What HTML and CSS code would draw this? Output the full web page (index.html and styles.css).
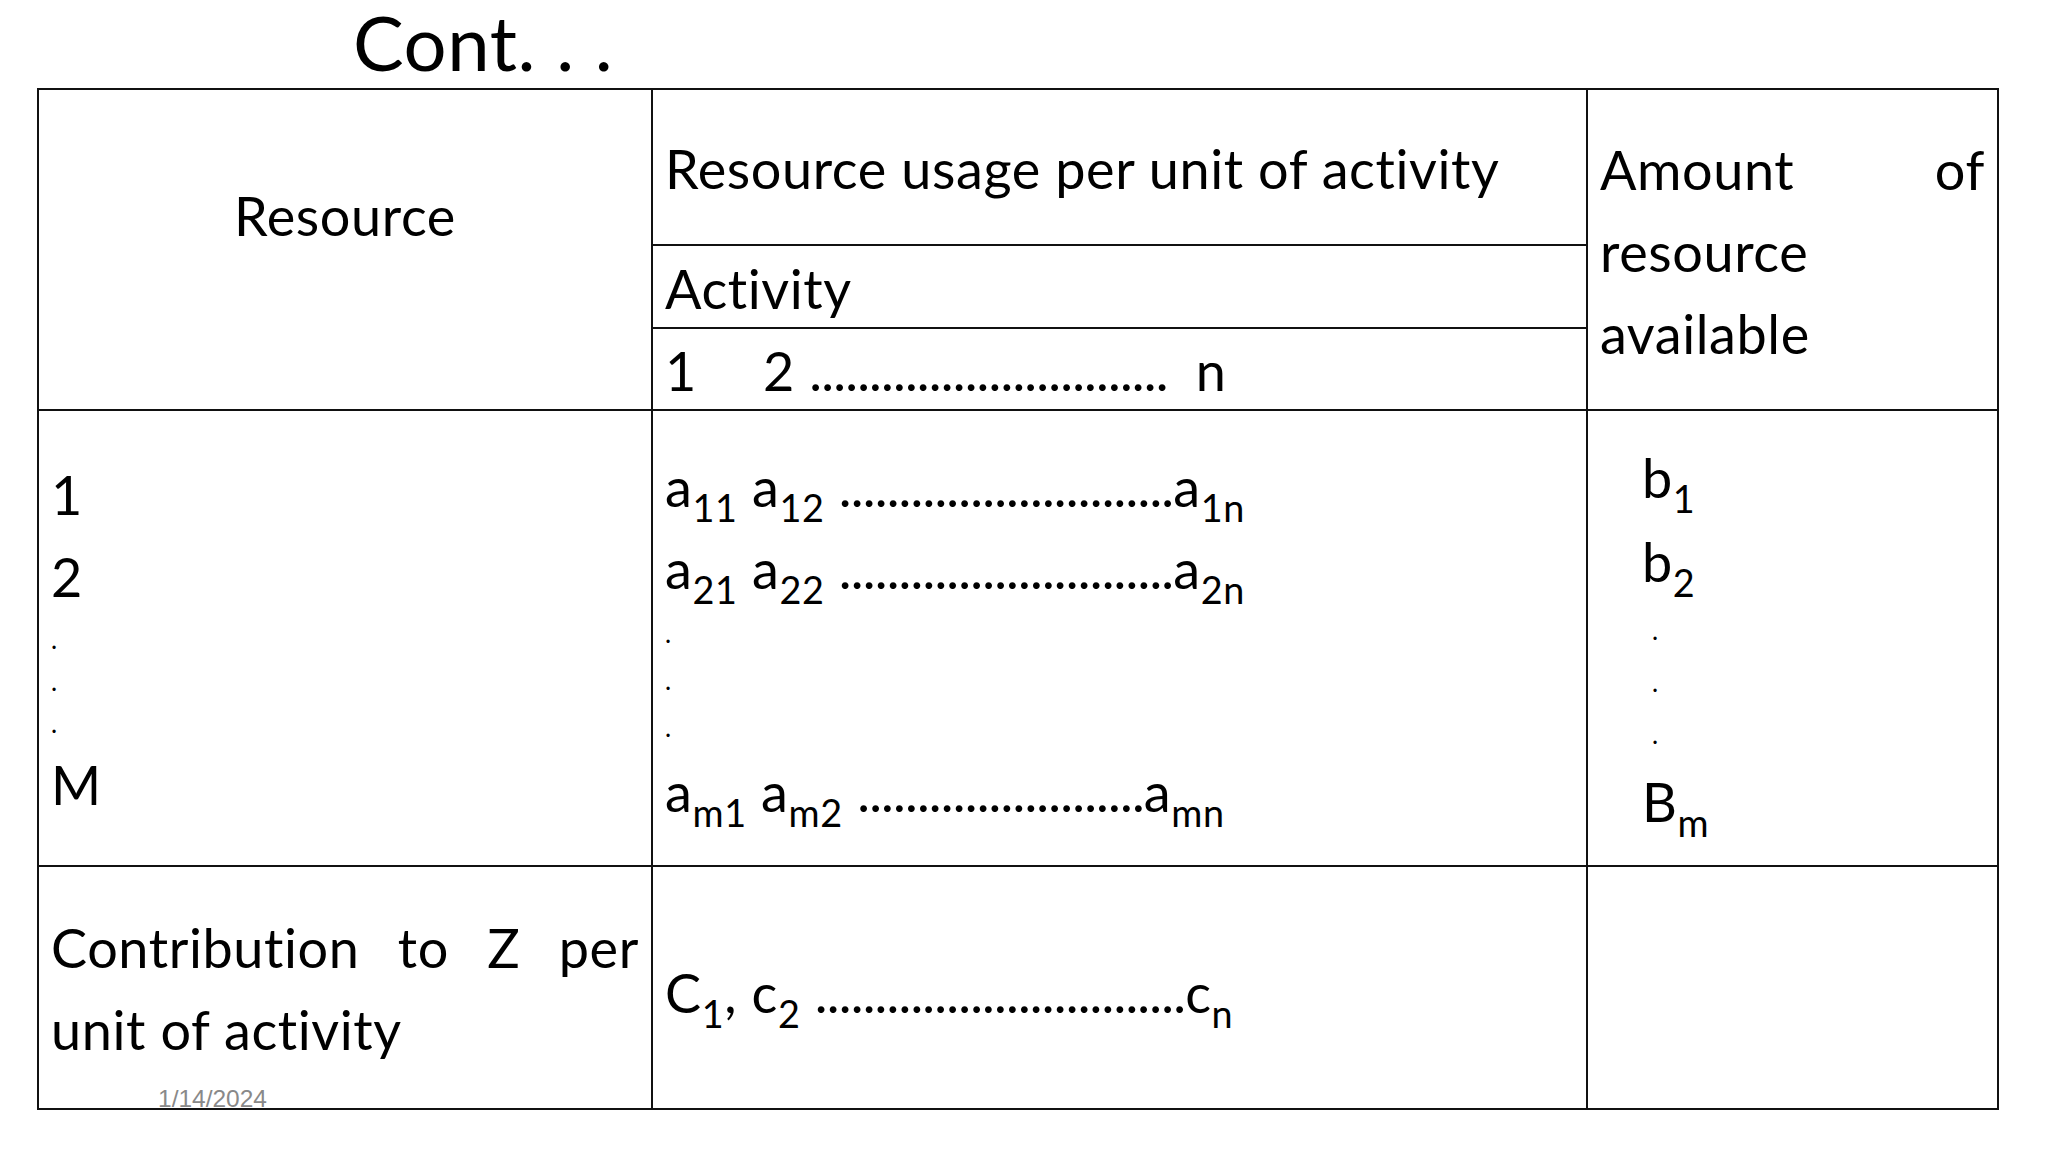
FILE: index.html
```html
<!DOCTYPE html>
<html lang="en">
<head>
<meta charset="utf-8">
<title>Cont. . .</title>
<link rel="stylesheet" href="styles.css">
</head>
<body>
<div class="slide">
  <h1 class="title">Cont. . .</h1>
  <table class="grid">
    <colgroup><col class="col-res"><col class="col-use"><col class="col-amt"></colgroup>
    <tbody>
      <tr class="row-h1">
        <td class="cell res-head" rowspan="3">Resource</td>
        <td class="cell usage">Resource usage per unit of activity</td>
        <td class="cell amount" rowspan="3"><span class="jline">Amount of</span><span class="line">resource</span><span class="line">available</span></td>
      </tr>
      <tr class="row-h2">
        <td class="cell act">Activity</td>
      </tr>
      <tr class="row-h3">
        <td class="cell nums"><span class="n1">1</span><span class="n2">2</span> <span class="dots">..............................</span><span class="nn">n</span></td>
      </tr>
      <tr class="row-body">
        <td class="cell body-res">
          <div class="line">1</div>
          <div class="line">2</div>
          <div class="dot">.</div>
          <div class="dot">.</div>
          <div class="dot">.</div>
          <div class="line">M</div>
        </td>
        <td class="cell body-use">
          <div class="line">a<sub>11</sub> a<sub>12</sub> <span class="dots">............................</span>a<sub>1n</sub></div>
          <div class="line">a<sub>21</sub> a<sub>22</sub> <span class="dots">............................</span>a<sub>2n</sub></div>
          <div class="dot">.</div>
          <div class="dot">.</div>
          <div class="dot">.</div>
          <div class="line">a<sub>m1</sub> a<sub>m2</sub> <span class="dots">........................</span>a<sub>mn</sub></div>
        </td>
        <td class="cell body-amt">
          <div class="line">b<sub>1</sub></div>
          <div class="line">b<sub>2</sub></div>
          <div class="dot">.</div>
          <div class="dot">.</div>
          <div class="dot">.</div>
          <div class="line">B<sub>m</sub></div>
        </td>
      </tr>
      <tr class="row-z">
        <td class="cell contrib"><span class="jline">Contribution to Z per</span><span class="line">unit of activity</span></td>
        <td class="cell cvals">C<sub>1</sub>, c<sub>2</sub> <span class="dots">...............................</span>c<sub>n</sub></td>
        <td class="cell empty"></td>
      </tr>
    </tbody>
  </table>
  <div class="date">1/14/2024</div>
</div>
</body>
</html>
```

FILE: styles.css
```css
* { box-sizing: border-box; }
html, body { margin: 0; padding: 0; background: #ffffff; }
body {
  width: 2048px;
  height: 1152px;
  overflow: hidden;
  font-family: "Lato", "Noto Sans", sans-serif;
  color: #000000;
}
.slide { position: relative; width: 2048px; height: 1152px; }

.title {
  margin: 0;
  height: 88px;
  padding-left: 353px;
  font-size: 76px;
  font-weight: 400;
  line-height: 84px;
  letter-spacing: 0.6px;
}

.grid {
  margin-left: 37px;
  width: 1961px;
  border-collapse: collapse;
  table-layout: fixed;
  font-size: 54px;
  line-height: 82px;
  letter-spacing: 0.6px;
}
.col-res { width: 614px; }
.col-use { width: 935px; }
.col-amt { width: 411px; }

.cell {
  border: 2px solid #111111;
  vertical-align: top;
  padding-left: 12px;
  padding-right: 12px;
}
.row-h1 { height: 156px; }
.row-h2 { height: 83px; }
.row-h3 { height: 82px; }
.row-body { height: 456px; }
.row-z { height: 243px; }

.line { display: block; }
.jline { display: block; text-align: justify; text-align-last: justify; }

.res-head { text-align: center; padding-top: 85px; }
.usage { padding-top: 38px; }
.amount { padding-top: 39px; }
.act { padding-top: 8px; line-height: 70px; }
.nums { padding-top: 7px; line-height: 70px; }
.n1 { display: inline-block; width: 98px; }
.nn { margin-left: 28px; }

.dots { letter-spacing: -0.8px; }

sub {
  font-size: 0.7em;
  line-height: 0;
  vertical-align: -15px;
}

.dot { font-size: 26px; line-height: 42px; }

.body-res { padding-top: 43px; }
.body-use { padding-top: 35px; }
.body-use .dot { line-height: 47px; }
.body-amt { padding-top: 25px; padding-left: 54px; }
.body-amt .line { line-height: 84px; }
.body-amt .dot { line-height: 52px; padding-left: 10px; }

.contrib { padding-top: 40px; }
.cvals { padding-top: 85px; }

.date {
  position: absolute;
  left: 158px;
  top: 1087px;
  font-family: "Liberation Sans", Arial, sans-serif;
  font-size: 24.5px;
  line-height: 24px;
  color: #898989;
}
```
